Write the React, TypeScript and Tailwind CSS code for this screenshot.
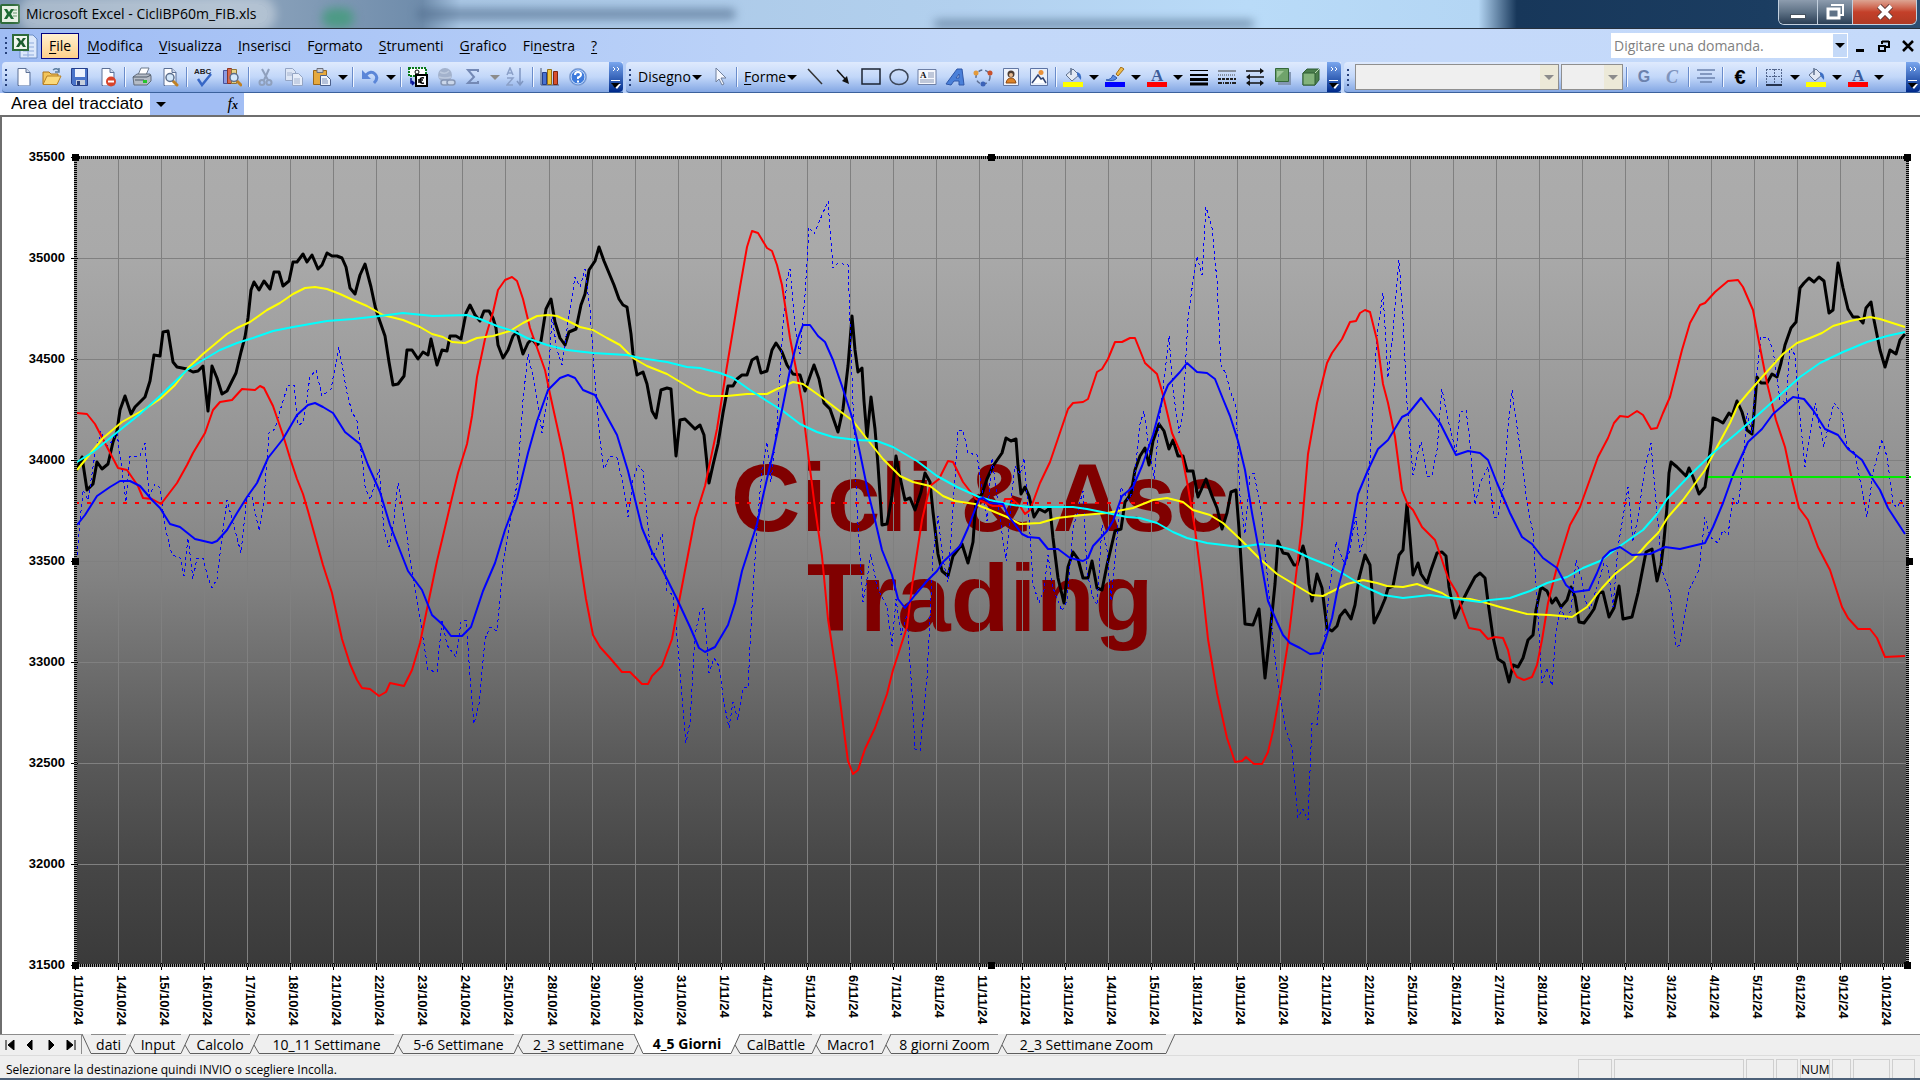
import type { ReactNode } from "react";
import clsx from "clsx";

const menus = [
  { key: "F", before: "", after: "ile" },
  { key: "M", before: "", after: "odifica" },
  { key: "V", before: "", after: "isualizza" },
  { key: "I", before: "", after: "nserisci" },
  { key: "o", before: "F", after: "rmato" },
  { key: "S", before: "", after: "trumenti" },
  { key: "G", before: "", after: "rafico" },
  { key: "n", before: "Fi", after: "estra" },
  { key: "?", before: "", after: "" },
];

const prices = ["35500", "35000", "34500", "34000", "33500", "33000", "32500", "32000", "31500"];

const dates = [
  "11/10/24", "14/10/24", "15/10/24", "16/10/24", "17/10/24", "18/10/24", "21/10/24", "22/10/24",
  "23/10/24", "24/10/24", "25/10/24", "28/10/24", "29/10/24", "30/10/24", "31/10/24", "1/11/24",
  "4/11/24", "5/11/24", "6/11/24", "7/11/24", "8/11/24", "11/11/24", "12/11/24", "13/11/24",
  "14/11/24", "15/11/24", "18/11/24", "19/11/24", "20/11/24", "21/11/24", "22/11/24", "25/11/24",
  "26/11/24", "27/11/24", "28/11/24", "29/11/24", "2/12/24", "3/12/24", "4/12/24", "5/12/24",
  "6/12/24", "9/12/24", "10/12/24",
];

const sheets = [
  { name: "dati", width: "w-[35px]" },
  { name: "Input", width: "w-[46px]" },
  { name: "Calcolo", width: "w-[60px]" },
  { name: "10_11 Settimane", width: "w-[135px]" },
  { name: "5-6 Settimane", width: "w-[111px]" },
  { name: "2_3 settimane", width: "w-[111px]" },
  { name: "4_5 Giorni", width: "w-[88px]", active: true },
  { name: "CalBattle", width: "w-[72px]" },
  { name: "Macro1", width: "w-[61px]" },
  { name: "8 giorni Zoom", width: "w-[107px]" },
  { name: "2_3 Settimane Zoom", width: "w-[159px]" },
];

const price =
  "76,471 82,457 87,490 93,484 97,462 102,469 108,464 113,442 117,431 120,410 125,396 131,414 135,407 145,397 150,381 154,355 160,356 163,332 168,331 173,362 177,367 187,369 193,372 198,371 203,366 208,411 212,366 217,378 222,394 227,391 236,373 241,352 245,337 248,318 251,290 254,282 259,290 264,281 270,289 274,272 279,272 283,286 289,281 293,262 297,262 303,254 307,262 312,255 318,269 322,265 327,253 332,256 337,256 342,258 346,267 350,288 355,294 360,275 365,264 371,287 375,306 378,316 385,336 389,362 393,385 398,384 404,376 407,350 412,350 418,359 423,352 428,355 431,339 437,365 442,350 447,351 450,336 456,336 461,339 466,313 470,305 475,315 480,321 484,311 489,311 493,318 496,328 498,345 503,358 508,350 513,336 517,332 523,354 528,343 532,339 537,345 541,341 546,309 551,299 555,322 560,338 565,345 569,332 576,329 581,305 585,294 589,270 595,261 599,247 604,261 609,273 614,285 619,299 623,305 627,307 631,334 633,354 637,375 643,372 647,384 652,411 656,418 661,390 667,388 671,389 676,456 680,420 685,419 695,429 700,425 704,435 709,483 713,465 718,444 723,413 728,386 733,386 737,379 742,375 747,375 752,360 757,357 761,373 767,371 772,350 776,343 782,352 787,365 793,374 800,375 805,391 808,382 814,365 819,379 824,403 830,409 838,432 843,409 848,366 852,316 855,350 858,372 862,368 864,401 867,437 871,397 875,429 878,465 882,525 887,524 892,496 896,456 900,477 905,500 910,498 915,510 921,492 925,473 930,482 933,512 938,554 942,571 948,576 953,556 962,544 968,563 973,542 976,500 982,494 987,479 993,466 1002,453 1006,438 1011,441 1016,439 1018,466 1021,494 1025,487 1029,496 1034,517 1039,509 1045,512 1050,508 1053,538 1058,578 1064,603 1068,567 1073,552 1078,559 1083,578 1088,578 1092,561 1097,588 1102,590 1107,565 1115,531 1121,529 1125,502 1131,494 1135,470 1140,456 1145,448 1149,465 1153,441 1159,424 1164,431 1169,449 1173,440 1178,456 1183,456 1187,471 1193,471 1198,497 1206,479 1212,496 1217,508 1222,529 1227,513 1231,492 1236,490 1239,529 1242,576 1245,624 1253,625 1259,609 1262,643 1265,678 1268,651 1272,614 1275,584 1278,541 1283,553 1288,554 1294,565 1297,565 1303,546 1307,561 1309,584 1312,601 1317,574 1322,588 1327,628 1332,631 1337,626 1340,616 1345,610 1351,619 1355,605 1359,578 1365,555 1370,565 1372,592 1374,623 1380,611 1385,599 1388,588 1393,586 1399,555 1403,550 1407,504 1410,538 1413,575 1418,563 1421,574 1427,583 1431,570 1437,553 1442,552 1446,556 1449,587 1455,618 1462,602 1468,590 1475,577 1480,573 1485,578 1488,602 1493,637 1498,659 1504,663 1509,682 1513,665 1518,667 1523,658 1528,640 1533,635 1536,610 1541,587 1547,591 1552,603 1556,598 1561,607 1567,600 1571,587 1575,597 1579,622 1584,623 1590,615 1594,609 1599,593 1603,592 1609,617 1614,608 1619,586 1623,619 1632,617 1638,593 1646,552 1652,549 1657,581 1661,565 1664,540 1667,507 1669,473 1671,462 1677,467 1686,476 1689,468 1693,477 1699,494 1705,487 1708,467 1711,443 1713,418 1718,420 1723,423 1729,413 1732,416 1737,401 1742,412 1747,430 1752,434 1754,413 1757,377 1761,383 1767,383 1772,374 1777,377 1781,363 1785,345 1791,328 1796,322 1800,288 1804,283 1809,278 1814,282 1819,277 1824,281 1829,313 1833,310 1838,263 1843,288 1848,309 1853,317 1858,317 1863,323 1866,308 1871,302 1874,320 1880,350 1885,367 1890,350 1896,354 1900,340 1905,334";

const yellow =
  "77,470 90,454 103,438 122,422 145,409 160,399 175,385 188,368 203,354 227,334 237,328 250,322 267,310 280,303 293,294 305,288 315,287 327,289 340,294 353,300 367,306 383,315 403,320 420,327 432,334 443,337 452,342 465,343 477,338 493,336 510,331 523,323 537,316 548,315 557,316 570,322 580,327 593,330 607,338 620,345 633,358 647,366 667,374 687,386 697,392 710,396 727,396 747,394 767,394 777,389 793,382 803,384 820,396 837,409 853,421 867,439 883,459 900,476 913,482 930,486 943,496 955,501 975,504 990,510 1007,517 1020,524 1040,523 1057,518 1083,515 1107,513 1133,508 1153,500 1167,498 1183,502 1193,510 1210,515 1223,523 1240,539 1260,559 1277,574 1297,586 1312,595 1323,596 1347,584 1363,580 1377,583 1387,586 1403,587 1417,584 1428,588 1442,593 1450,598 1470,599 1483,602 1500,607 1527,614 1550,615 1572,617 1587,607 1602,588 1615,574 1633,560 1647,544 1658,533 1668,517 1683,500 1705,470 1717,447 1730,423 1738,405 1748,393 1763,376 1783,354 1797,343 1810,338 1822,333 1833,326 1850,321 1870,317 1880,319 1905,327";

const cyan =
  "77,462 93,452 115,434 140,414 160,396 187,370 203,360 220,350 237,343 253,338 273,331 293,327 327,321 353,319 380,316 403,313 433,316 467,315 480,319 497,326 513,331 527,338 547,345 567,350 593,353 627,355 640,358 667,362 687,367 700,368 720,373 733,378 750,390 767,401 783,411 800,424 817,432 833,437 857,440 877,441 893,447 917,461 937,476 957,487 979,497 990,500 1007,504 1027,507 1073,507 1087,509 1107,513 1127,517 1140,518 1157,523 1173,532 1187,538 1207,543 1240,547 1260,544 1277,546 1293,550 1310,558 1330,566 1347,576 1363,586 1383,595 1403,598 1430,595 1450,598 1480,602 1490,600 1510,598 1530,591 1547,583 1567,577 1583,568 1600,561 1620,546 1643,530 1657,514 1667,499 1690,475 1713,453 1737,433 1760,413 1780,395 1800,377 1820,363 1843,352 1867,342 1887,336 1905,332";

const red =
  "77,413 87,414 95,424 107,447 118,468 127,470 138,486 143,498 152,499 161,504 177,483 187,465 193,453 205,433 213,410 220,402 232,400 242,389 255,390 260,386 264,388 273,406 283,435 290,458 297,479 303,494 308,511 323,565 332,593 342,639 350,664 357,680 362,688 370,689 379,696 386,692 390,683 404,686 412,670 420,643 427,609 437,561 443,536 451,502 458,473 467,444 472,416 477,377 485,339 493,312 498,290 505,280 512,277 517,281 523,299 530,328 535,342 545,370 550,394 563,453 572,504 580,560 586,599 593,635 600,647 610,658 622,672 630,672 642,684 648,684 652,676 662,666 672,639 678,607 687,560 695,518 705,486 717,429 725,378 733,330 740,287 747,247 752,231 758,233 767,248 772,251 777,265 782,285 790,338 797,374 802,403 808,453 815,508 822,556 828,619 837,678 845,739 848,761 853,774 858,770 865,749 875,728 887,694 893,670 907,627 913,579 922,520 930,486 939,479 948,461 953,462 963,482 976,499 993,506 1003,506 1005,499 1012,499 1020,506 1025,514 1030,510 1040,483 1050,462 1068,409 1073,403 1083,402 1088,399 1097,372 1102,369 1108,359 1115,342 1122,342 1130,338 1135,338 1145,363 1157,374 1163,395 1172,433 1182,456 1188,487 1195,529 1202,584 1208,639 1217,693 1227,738 1235,762 1242,761 1246,757 1254,764 1262,764 1268,752 1273,731 1280,693 1288,643 1295,584 1302,525 1308,454 1317,403 1327,363 1332,353 1342,339 1350,322 1356,321 1360,313 1365,310 1370,312 1377,340 1383,384 1388,403 1395,437 1402,490 1408,505 1413,510 1422,527 1435,540 1442,560 1448,578 1457,593 1463,612 1469,628 1480,630 1488,639 1495,637 1503,638 1508,650 1512,668 1517,677 1524,680 1532,677 1537,665 1542,640 1548,603 1557,567 1570,525 1580,507 1598,457 1608,438 1614,423 1620,416 1628,417 1637,411 1643,415 1651,429 1657,428 1663,413 1670,397 1682,350 1690,323 1700,305 1705,303 1715,292 1728,281 1738,280 1743,287 1753,310 1758,337 1767,383 1776,420 1785,447 1792,480 1799,508 1808,520 1818,547 1830,570 1842,607 1848,618 1858,629 1870,629 1877,638 1885,657 1905,656";

const blue =
  "77,525 85,515 97,496 110,487 120,481 130,481 140,486 152,500 160,508 170,524 180,527 195,539 212,543 217,541 227,530 237,513 247,497 257,483 268,458 283,439 297,415 308,405 315,403 323,407 333,413 345,432 360,444 368,465 380,492 390,525 408,571 422,590 432,615 442,624 451,636 462,636 471,627 483,591 495,563 505,530 517,498 528,453 537,421 548,390 560,378 568,375 575,378 583,390 595,395 605,413 617,435 628,471 642,528 652,552 663,571 677,599 690,627 699,648 705,652 715,647 728,625 735,603 742,571 750,546 757,524 763,496 773,453 783,405 790,370 798,338 803,325 810,325 818,336 825,342 833,360 842,386 852,417 860,453 868,492 875,520 882,550 892,575 898,599 905,608 915,595 927,581 937,571 943,562 960,546 968,528 979,499 983,498 990,503 1003,504 1008,515 1022,534 1028,537 1039,538 1048,549 1058,549 1070,558 1083,561 1088,558 1093,546 1107,531 1113,521 1122,496 1133,487 1142,466 1153,435 1163,397 1168,385 1180,372 1187,363 1197,372 1207,373 1215,379 1223,399 1230,416 1238,441 1245,470 1252,513 1262,567 1268,601 1277,622 1283,635 1290,643 1300,648 1310,654 1320,653 1325,641 1332,618 1337,592 1347,555 1358,494 1368,470 1378,449 1388,440 1402,417 1408,414 1421,398 1440,423 1450,443 1456,455 1468,451 1480,453 1488,460 1497,483 1510,513 1522,537 1532,544 1543,558 1557,568 1566,585 1574,592 1589,590 1597,573 1603,558 1610,551 1620,547 1632,555 1650,554 1665,547 1680,549 1705,543 1713,527 1723,503 1733,475 1748,442 1762,429 1773,414 1787,402 1793,397 1804,399 1813,410 1825,429 1838,435 1848,449 1862,460 1872,478 1880,490 1888,508 1905,534";

const dashed =
  "77,555 83,490 88,500 95,454 101,431 106,446 110,444 117,433 122,470 126,502 130,456 140,456 145,443 149,496 155,484 160,488 165,527 172,555 180,558 184,576 188,538 193,579 197,558 203,558 208,578 212,588 217,579 222,538 227,500 233,523 241,553 247,496 252,496 259,531 264,500 269,433 275,429 282,404 288,385 294,385 298,425 303,423 310,377 316,370 322,396 331,389 339,347 347,393 352,412 357,421 362,458 365,486 370,500 375,484 379,469 384,530 389,547 393,527 398,483 405,523 412,572 420,618 428,670 437,672 442,620 447,645 456,657 461,622 466,620 470,676 474,724 479,704 485,639 490,627 497,631 503,565 510,523 517,484 523,400 528,354 535,386 542,433 547,401 552,316 557,350 562,365 568,322 575,277 580,287 585,269 590,310 595,382 600,441 604,469 610,456 617,458 623,484 628,517 633,480 638,465 643,471 648,528 652,560 657,548 662,534 667,591 673,595 678,647 686,743 690,722 695,635 700,611 704,608 709,673 714,658 719,666 724,702 729,728 733,702 738,720 743,688 748,687 752,607 757,528 762,469 767,442 771,482 777,425 783,326 787,279 790,269 795,326 800,354 805,295 809,227 814,234 820,220 828,201 833,268 838,263 848,265 852,378 857,508 863,602 867,579 871,554 877,587 887,607 892,646 896,599 901,635 907,615 912,694 915,749 920,751 927,678 933,556 938,516 943,560 948,582 953,508 958,430 963,430 968,453 977,455 980,475 987,521 992,458 998,504 1006,561 1012,491 1015,466 1020,475 1024,458 1029,517 1033,584 1039,603 1044,590 1048,555 1053,588 1062,611 1067,601 1073,529 1083,491 1087,571 1092,595 1097,605 1102,525 1107,550 1111,601 1117,538 1121,487 1128,500 1133,491 1140,424 1144,411 1149,449 1154,479 1160,416 1169,336 1173,390 1179,433 1183,411 1188,319 1193,281 1197,256 1202,275 1206,207 1212,228 1217,281 1221,365 1226,374 1230,390 1236,407 1240,496 1245,534 1250,475 1254,473 1262,517 1268,584 1273,639 1278,685 1285,727 1292,748 1298,818 1303,809 1308,820 1312,723 1317,725 1323,656 1330,584 1336,542 1341,555 1345,565 1350,550 1356,517 1360,552 1365,534 1370,458 1377,336 1383,293 1388,378 1393,332 1399,260 1403,319 1407,403 1413,475 1417,456 1421,442 1427,477 1432,476 1437,450 1442,389 1448,420 1456,452 1460,412 1466,410 1469,433 1475,505 1480,483 1488,467 1494,517 1498,517 1504,483 1508,427 1512,390 1517,427 1522,460 1527,503 1533,533 1537,600 1542,683 1547,668 1552,686 1556,633 1561,607 1566,621 1571,610 1576,560 1581,577 1585,600 1590,609 1597,587 1604,563 1608,567 1613,607 1618,547 1628,487 1633,542 1638,517 1645,467 1651,443 1655,490 1662,570 1670,593 1676,647 1680,645 1689,590 1699,570 1705,517 1710,537 1718,543 1723,530 1728,535 1733,498 1738,505 1743,467 1747,413 1752,433 1755,390 1761,337 1768,337 1773,350 1780,400 1786,403 1790,347 1795,355 1800,417 1805,467 1810,433 1815,403 1824,447 1828,427 1834,403 1842,413 1847,447 1855,453 1860,480 1867,517 1873,473 1882,439 1887,457 1893,503 1897,508 1901,500 1905,509";

const handles = [
  [75, 157], [991, 157], [1907, 157],
  [75, 561], [1909, 561],
  [75, 965], [991, 965], [1907, 965],
];

const Svg = ({ children, className }: { children: ReactNode; className?: string }) => (
  <svg viewBox="0 0 20 20" className={clsx("size-5 shrink-0", className)} fill="none" aria-hidden="true">
    {children}
  </svg>
);

const ExcelIcon = () => (
  <Svg>
    <rect x="1" y="1" width="18" height="18" rx="1" fill="#e7f0e4" stroke="#2f6b3a" strokeWidth="2" />
    <path d="M13 6h4M13 9h4M13 12h4" stroke="#5d8f63" />
    <path d="M4 5h3l2 3 2-3h3l-3 5 3 5h-3l-2-3-2 3H4l3-5z" fill="#1d6b33" />
  </Svg>
);

const PageIcon = ({ children }: { children?: ReactNode }) => (
  <Svg>
    <path d="M4 1.500h8l4 4v13H4z" fill="#fdfdff" stroke="#5b6f94" />
    <path d="M12 1.500v4h4" fill="#cfd9ec" stroke="#5b6f94" />
    <path d="M15.500 6v12.500H5" stroke="#9fb0cf" />
    {children}
  </Svg>
);

const OpenIcon = () => (
  <Svg>
    <path d="M1 17V5h6l2 2h7v3" fill="#f3c55a" stroke="#a9731c" />
    <path d="M1 17.500 5 9h14l-4 8.500z" fill="#fbd97b" stroke="#b98124" />
    <path d="M11 3q4-3 6 1M17 1v4h-4" stroke="#5c7d9f" strokeWidth="1.500" />
  </Svg>
);

const SaveIcon = () => (
  <Svg>
    <path d="M1.500 1.500h16v17h-14l-2-2z" fill="#4a74c9" stroke="#27418c" />
    <path d="M5 2h10v8H5z" fill="#eef3fd" />
    <path d="M6 13h9v5H6z" fill="#c6cfdd" />
    <path d="M7 14h3v4H7z" fill="#2b3f77" />
  </Svg>
);

const PrintIcon = () => (
  <Svg>
    <path d="M6 8 9 1h8l-3 7z" fill="#fff" stroke="#6d7a8c" />
    <path d="M1 10l4-3h13l1 2v5l-4 4H2z" fill="#b5bcc6" stroke="#606b7a" />
    <path d="M1 10h14l4-2M3 13h9" stroke="#4f5a68" />
    <path d="M11 13h4v3h-4z" fill="#25c42d" />
  </Svg>
);

const Lens = () => (
  <>
    <path d="m13 14 4 4" stroke="#c08125" strokeWidth="3" strokeLinecap="round" />
    <circle cx="10" cy="10.500" r="4" fill="#d5e8fb" stroke="#5d6f8c" strokeWidth="1.500" />
  </>
);

const SpellIcon = () => (
  <Svg>
    <text x="0" y="7" className="font-['Liberation_Sans'] text-[8px] font-bold" fill="#222">ABC</text>
    <path d="m4 12 4 6 9-11" stroke="#3767c6" strokeWidth="2.500" />
  </Svg>
);

const ResearchIcon = () => (
  <Svg>
    <path d="M1.500 3.500h4v13h-4z" fill="#8c9ae0" stroke="#47529c" />
    <path d="M5.500 1.500h4v15h-4z" fill="#d7694f" stroke="#8d3522" />
    <path d="M9.500 2.500h5v14h-5z" fill="#e9d489" stroke="#907636" />
    <g transform="translate(2 0)"><Lens /></g>
  </Svg>
);

const CutIcon = () => (
  <Svg>
    <path d="m6 2 6 11M13 2 8 13" stroke="#8fa0bd" strokeWidth="2" />
    <circle cx="6" cy="15.500" r="2.500" stroke="#8fa0bd" strokeWidth="2" />
    <circle cx="13" cy="15.500" r="2.500" stroke="#8fa0bd" strokeWidth="2" />
  </Svg>
);

const CopyIcon = () => (
  <Svg>
    <path d="M1.500 1.500h7l3 3v9h-10z" fill="#dde6f5" stroke="#94a5c4" />
    <path d="M8.500 6.500h6l4 4v8h-10z" fill="#e6edf9" stroke="#94a5c4" />
    <path d="M3 6h5M3 8h5M10 12h6M10 14h6M10 16h6" stroke="#a5b4d0" />
  </Svg>
);

const PasteIcon = () => (
  <Svg>
    <path d="M1.500 3.500h13v14h-13z" fill="#e6a93e" stroke="#99661a" />
    <path d="M5 1.500h6v4H5z" fill="#c9cbd2" stroke="#6c6f7b" />
    <path d="M8.500 8.500h6l4 4v6h-10z" fill="#eef3fb" stroke="#4a5f8b" />
    <path d="M10 12h5M10 14h6M10 16h6" stroke="#7d90b8" />
  </Svg>
);

const UndoIcon = () => (
  <Svg>
    <path d="M6 8q5-5 9-1t-1 9" stroke="#5b86d8" strokeWidth="3" />
    <path d="M2 3v9h9z" fill="#5b86d8" />
  </Svg>
);

const EuroConvertIcon = () => (
  <Svg>
    <path d="M1 1h17v8H1z" fill="#fff" stroke="#0a7a1a" strokeDasharray="2 1" strokeWidth="2" />
    <circle cx="9" cy="5" r="2" stroke="#000" />
    <path d="M8 8h11v11H8z" fill="#fff" stroke="#000" strokeWidth="2" />
    <path d="M16 11q-4-1-4 2.500t4 2.500M10 13h5M10 15h4" stroke="#000" strokeWidth="1.500" />
    <path d="M3 11v5h3M4 14l2 2-2 2" stroke="#0b189b" strokeWidth="1.500" />
  </Svg>
);

const LinkIcon = () => (
  <Svg>
    <circle cx="9" cy="8" r="7" fill="#a3b2cc" />
    <path d="M4 5q5 3 9-1M3 10q6 2 12 0" stroke="#bcc9de" strokeWidth="1.500" />
    <rect x="5" y="13" width="8" height="5" rx="2.500" stroke="#8797b4" strokeWidth="1.500" fill="#cbd7ea" />
    <rect x="11" y="13" width="8" height="5" rx="2.500" stroke="#8797b4" strokeWidth="1.500" fill="#cbd7ea" />
  </Svg>
);

const SumIcon = () => (
  <Svg>
    <path d="M14 5V3H4l6 7-6 6h10v-2" stroke="#7489b5" strokeWidth="2" />
  </Svg>
);

const SortIcon = () => (
  <Svg>
    <path d="m1 8 3-7 3 7M2 6h4M1 11h6l-6 7h6" stroke="#8ba0c8" strokeWidth="1.500" />
    <path d="M14 1v16m-3-3 3 4 3-4" stroke="#8097c2" strokeWidth="1.500" />
  </Svg>
);

const ChartIcon = () => (
  <Svg>
    <path d="M1 1v17h18" stroke="#4b5878" />
    <path d="M2.500 5.500h4v12h-4z" fill="#4871cf" stroke="#233f8c" />
    <path d="M7.500 2.500h4v15h-4z" fill="#f0c53e" stroke="#94701a" />
    <path d="M13.500 4.500h4v13h-4z" fill="#d8502d" stroke="#7c2612" />
  </Svg>
);

const HelpIcon = () => (
  <Svg>
    <circle cx="10" cy="10" r="8.500" fill="#3e7bdc" stroke="#8fa7d1" />
    <circle cx="10" cy="10" r="7" stroke="#dce9fb" />
    <path d="M7 8q0-3 3-3t3 2.500q0 2-3 3V12M10 13.500v2" stroke="#fff" strokeWidth="2" />
  </Svg>
);

const PointerIcon = () => (
  <Svg>
    <path d="M6 1v14l3-3 3 6 2-1-3-6h5z" fill="#f5f8ff" stroke="#6f7f9c" />
  </Svg>
);

const ArrowLineIcon = () => (
  <Svg>
    <path d="m4 3 10 11" stroke="#111" strokeWidth="1.500" />
    <path d="m16 17-2-8-5 5z" fill="#111" />
  </Svg>
);

const TextBoxIcon = () => (
  <Svg>
    <path d="M1 2.500h18v15H1z" fill="#f6f8fd" stroke="#6d7fa5" />
    <text x="3" y="11" className="font-['Liberation_Serif'] text-[9px] font-bold" fill="#111">A</text>
    <path d="M11 6h6M11 8h6M11 10h6M3 13h14M3 15h14" stroke="#8796b5" />
  </Svg>
);

const WordArtIcon = () => (
  <Svg>
    <path d="M1 17 12 2h5l2 16h-5v-4H9l-3 4zM11 11h3V7z" fill="#4a80d9" stroke="#2f57a8" fillRule="evenodd" />
  </Svg>
);

const DiagramIcon = () => (
  <Svg>
    <circle cx="10" cy="10" r="7" stroke="#5b6d90" strokeWidth="1.500" strokeDasharray="4 3" />
    <circle cx="3" cy="6" r="2.500" fill="#e39a3b" />
    <circle cx="17" cy="6" r="2.500" fill="#c8512c" />
    <circle cx="10" cy="17" r="2.500" fill="#3c63b8" />
  </Svg>
);

const ClipArtIcon = () => (
  <Svg>
    <path d="M2.500 1.500h15v17h-15z" fill="#eef2fb" stroke="#6378a4" />
    <circle cx="10" cy="7" r="3.500" fill="#4c3c33" />
    <path d="M5 16q1-5 5-5t5 5z" fill="#dd8327" stroke="#8d4a12" />
    <circle cx="10" cy="8" r="2" fill="#e8bb92" />
  </Svg>
);

const PictureIcon = () => (
  <Svg>
    <path d="M1.500 1.500h17v17h-17z" fill="#e8effb" stroke="#5d74a5" />
    <circle cx="12" cy="5.500" r="2.500" fill="#e9913a" />
    <path d="M3 16 9 8l3 4 2-1 3 5" stroke="#2f4374" strokeWidth="1.500" fill="#fff" />
  </Svg>
);

const FillIcon = () => (
  <Svg>
    <path d="m3 8 7-6 6 6-7 6z" fill="#e2e9f4" stroke="#61728f" />
    <path d="M8 1v7" stroke="#61728f" strokeWidth="1.500" />
    <path d="M14 5q5 1 4 8-2-2-4-5z" fill="#3d6fc4" />
    <path d="M0 15h20v5H0z" fill="#ff0" />
  </Svg>
);

const BrushIcon = () => (
  <Svg>
    <path d="m11 7 5-7 3 2-6 7z" fill="#eebb4b" stroke="#a16d16" />
    <path d="M1 13q5 0 7-5l4 3q-3 4-11 2z" fill="#5b8be0" stroke="#2c57aa" />
    <path d="M0 15h20v5H0z" fill="#00f" />
  </Svg>
);

const FontColorIcon = () => (
  <Svg className="overflow-visible">
    <text x="4" y="14" className="font-['Liberation_Serif'] text-[17px] font-bold" fill="#3c5c99">A</text>
    <path d="M0 15h20v5H0z" fill="#f00" />
  </Svg>
);

const LineStyleIcon = () => (
  <Svg>
    <path d="M1 3.500h18" stroke="#000" />
    <path d="M1 8h18" stroke="#000" strokeWidth="2" />
    <path d="M1 12.500h18" stroke="#000" strokeWidth="3" />
    <path d="M1 17h18" stroke="#000" strokeWidth="3" />
  </Svg>
);

const DashStyleIcon = () => (
  <Svg>
    <path d="M1 4h18" stroke="#444" />
    <path d="M1 8h18" stroke="#444" strokeDasharray="1 1" />
    <path d="M1 12h18" stroke="#222" strokeWidth="2" strokeDasharray="3 1" />
    <path d="M1 16h18" stroke="#222" strokeWidth="2" strokeDasharray="4 1 1 1" />
  </Svg>
);

const ArrowStyleIcon = () => (
  <Svg>
    <path d="M1 4h17M3 10h16M2 16h16" stroke="#111" strokeWidth="1.500" />
    <path d="m15 1 4 3-4 3zM5 7l-4 3 4 3zM5 13l-4 3 4 3zM15 13l4 3-4 3z" fill="#111" />
  </Svg>
);

const ShadowIcon = () => (
  <Svg>
    <path d="M5 5h13v13H5z" fill="#8396b3" />
    <path d="M2.500 1.500h13v13h-13z" fill="#6fa36b" stroke="#35683a" />
    <path d="M4 4h7L4 11z" fill="#9cc596" />
  </Svg>
);

const CubeIcon = () => (
  <Svg>
    <path d="M2 6 6 2h12v11l-4 5H2z" fill="#4a7d4c" stroke="#2f5f35" />
    <path d="M2 6h12v12H2z" fill="#83b37c" stroke="#2f5f35" />
    <path d="m14 6 4-4" stroke="#bcd8b5" />
  </Svg>
);

const AlignIcon = () => (
  <Svg>
    <path d="M1 3h18M4 7h12M1 11h18M4 15h12" stroke="#6c82ad" strokeWidth="1.500" />
  </Svg>
);

const BorderIcon = () => (
  <Svg>
    <path d="M2.500 2v15M10.500 2v15M17.500 2v15M2 2.500h16M2 9.500h16" stroke="#53668c" strokeDasharray="2 1" />
    <path d="M2 18h16" stroke="#26344f" strokeWidth="2" />
  </Svg>
);

const ToolButton = ({ label, children }: { label: string; children: ReactNode }) => (
  <button type="button" aria-label={label} className="flex h-7 w-7 shrink-0 items-center justify-center">
    {children}
  </button>
);

const Caret = ({ muted }: { muted?: boolean }) => (
  <svg viewBox="0 0 10 5" className="h-[5px] w-[10px] shrink-0" aria-hidden="true">
    <path d="M0 0h10L5 5z" fill={muted ? "#8c8c8c" : "#000"} />
  </svg>
);

const CaretButton = ({ label, muted }: { label: string; muted?: boolean }) => (
  <button type="button" aria-label={label} className="flex h-7 w-[14px] shrink-0 items-center justify-center">
    <Caret muted={muted} />
  </button>
);

const Separator = () => (
  <span className="flex w-[6px] shrink-0 justify-center">
    <span className="h-5 w-px bg-[#6a8ccb]" />
    <span className="h-5 w-px bg-[#f1f6ff]" />
  </span>
);

const Grip = () => (
  <span className="flex w-2 shrink-0 flex-col items-center gap-[3px]">
    {[0, 1, 2, 3].map((dot) => (
      <span key={dot} className="size-[2px] bg-[#27417c]" />
    ))}
  </span>
);

const MoreButton = () => (
  <button
    type="button"
    aria-label="Opzioni barra degli strumenti"
    className="flex w-[14px] shrink-0 flex-col items-center justify-between self-stretch rounded-r-sm bg-linear-to-b from-[#7aa6ee] to-[#00288a] pt-[5px] pb-[3px]"
  >
    <svg viewBox="0 0 8 5" className="h-[5px] w-2" fill="none" stroke="#fff" aria-hidden="true">
      <path d="m1 0 2 2-2 2M5 0l2 2-2 2" />
    </svg>
    <svg viewBox="0 0 10 9" className="h-[9px] w-[10px]" aria-hidden="true">
      <path d="M0 0h9v1H0z" fill="#fff" />
      <path d="M1 4h9L6 9z" fill="#fff" />
      <path d="M0 3h9L4 8z" fill="#000" />
    </svg>
  </button>
);

const toolbarClass =
  "flex items-center rounded-l-sm border-b border-[#3b619c] bg-linear-to-b from-[#dfeafd] via-[#c2d7f9] to-[#84a7e3]";

const TitleBar = () => (
  <header className="flex h-[29px] items-start justify-between overflow-hidden border-b border-[#26303c] bg-[linear-gradient(90deg,#7791ad_0,#8ea5bd_12%,#6f8cab_22%,#a9c6e4_24%,#b2d0ee_50%,#b9dbf8_65%,#b4d6f4_77%,#17375a_79%,#1b3d61_92%,#2c4f73_100%)]">
    <div className="flex h-7 items-center gap-[6px]">
      <ExcelIcon />
      <h1 className="rounded-full bg-white/35 pr-3 text-sm leading-5 shadow-[0_0_10px_8px_rgba(255,255,255,0.35)]">
        Microsoft Excel - CicliBP60m_FIB.xls
      </h1>
      <span className="ml-12 h-5 w-8 self-end rounded-full bg-[#4d9a85] blur-[5px]" />
      <span className="ml-14 h-3 w-80 rounded-full bg-[#54708f]/60 blur-[4px]" />
      <span className="ml-48 h-2 w-80 self-end rounded-full bg-[#54708f]/70 blur-[5px]" />
    </div>
    <div className="mr-[3px] flex h-[25px] overflow-hidden rounded-b-md border border-t-0 border-[#c3d0de]">
      <button type="button" aria-label="Riduci a icona" className="flex w-[39px] items-end justify-center border-r border-[#c3d0de] bg-linear-to-b from-[#8d9cae] via-[#5f7286] via-50% to-[#2b3f55] pb-[5px]">
        <span className="h-[5px] w-4 border border-[#47535f] bg-white" />
      </button>
      <button type="button" aria-label="Ripristina" className="flex w-[35px] items-center justify-center border-r border-[#c3d0de] bg-linear-to-b from-[#8d9cae] via-[#5f7286] via-50% to-[#2b3f55]">
        <svg viewBox="0 0 20 18" className="h-[18px] w-5" fill="none" aria-hidden="true">
          <path d="M6 2h12v10h-3" stroke="#fff" strokeWidth="2" />
          <path d="M3 6h11v9H3z" fill="#5f7286" stroke="#fff" strokeWidth="3" />
        </svg>
      </button>
      <button type="button" aria-label="Chiudi" className="flex w-[63px] items-center justify-center bg-linear-to-b from-[#dca493] via-[#c4402a] via-50% to-[#b03a24]">
        <svg viewBox="0 0 20 16" className="h-4 w-5" fill="none" aria-hidden="true">
          <path d="m4 2 12 12M16 2 4 14" stroke="#5f3a37" strokeWidth="6" />
          <path d="m4 2 12 12M16 2 4 14" stroke="#fff" strokeWidth="4" />
        </svg>
      </button>
    </div>
  </header>
);

const MenuBar = () => (
  <div className="flex h-[33px] items-center justify-between">
    <nav className="flex items-center pl-[2px]">
      <Grip />
      <span className="mr-[3px] flex pl-[2px]">
        <svg viewBox="0 0 26 26" className="size-[26px]" fill="none" aria-hidden="true">
          <path d="M8 2h13l4 4v19H8z" fill="#dce8fb" stroke="#6b8cc4" />
          <path d="M11 10h11M11 14h11M11 18h11M11 22h11M16 8v16" stroke="#8eaadb" />
          <path d="M1 2h15v15H1z" fill="#f0f6ee" stroke="#2e6b3a" strokeWidth="2" />
          <path d="M4 5h3l2 3 2-3h3l-3 4 3 5h-3l-2-3-2 3H4l3-5z" fill="#1d5e2f" />
        </svg>
      </span>
      {menus.map((menu, i) => (
        <button
          key={menu.key}
          type="button"
          className={clsx(
            "h-[26px] border px-[7px] text-sm leading-5",
            i === 0 ? "border-[#000080] bg-linear-to-b from-[#fff0cf] to-[#ffd08a]" : "border-transparent"
          )}
        >
          {menu.before}
          <span className="underline underline-offset-2">{menu.key}</span>
          {menu.after}
        </button>
      ))}
    </nav>
    <div className="flex items-center">
      <div className="flex h-[25px] w-[237px] bg-white">
        <input
          type="text"
          aria-label="Digitare una domanda"
          placeholder="Digitare una domanda."
          className="min-w-0 flex-1 px-[3px] text-sm outline-none placeholder:text-[#7f7f7f]"
        />
        <button type="button" aria-label="Mostra domande" className="my-px mr-px flex w-[14px] items-center justify-center bg-[#c4d9f8]">
          <Caret />
        </button>
      </div>
      <button type="button" aria-label="Riduci finestra" className="flex h-6 w-6 items-end justify-center pb-[6px]">
        <span className="h-[3px] w-2 bg-black" />
      </button>
      <button type="button" aria-label="Ripristina finestra" className="flex size-6 items-center justify-center">
        <svg viewBox="0 0 12 12" className="size-3" fill="none" stroke="#000" aria-hidden="true">
          <path d="M4 1v3M4 1.500h7M11 1v6H8" strokeWidth="2" />
          <path d="M1 6h6v5H1z" strokeWidth="2" />
        </svg>
      </button>
      <button type="button" aria-label="Chiudi finestra" className="flex size-6 items-center justify-center">
        <svg viewBox="0 0 12 12" className="size-3" stroke="#000" strokeWidth="2.500" aria-hidden="true">
          <path d="m1 1 10 10M11 1 1 11" />
        </svg>
      </button>
    </div>
  </div>
);

const Toolbars = () => (
  <div className="flex h-[31px] items-stretch gap-[3px] pl-[2px]">
    <div className={clsx(toolbarClass, "w-[621px]")}>
      <Grip />
      <ToolButton label="Nuovo"><PageIcon /></ToolButton>
      <ToolButton label="Apri"><OpenIcon /></ToolButton>
      <ToolButton label="Salva"><SaveIcon /></ToolButton>
      <ToolButton label="Autorizzazione">
        <PageIcon>
          <circle cx="13" cy="14.500" r="5" fill="#d8432b" />
          <path d="M10 14.500h6" stroke="#fff" strokeWidth="2" />
        </PageIcon>
      </ToolButton>
      <Separator />
      <ToolButton label="Stampa"><PrintIcon /></ToolButton>
      <ToolButton label="Anteprima di stampa"><PageIcon><Lens /></PageIcon></ToolButton>
      <Separator />
      <ToolButton label="Controllo ortografia"><SpellIcon /></ToolButton>
      <ToolButton label="Ricerche"><ResearchIcon /></ToolButton>
      <Separator />
      <ToolButton label="Taglia"><CutIcon /></ToolButton>
      <ToolButton label="Copia"><CopyIcon /></ToolButton>
      <ToolButton label="Incolla"><PasteIcon /></ToolButton>
      <CaretButton label="Opzioni Incolla" />
      <Separator />
      <ToolButton label="Annulla"><UndoIcon /></ToolButton>
      <CaretButton label="Elenco Annulla" />
      <Separator />
      <ToolButton label="Conversione euro"><EuroConvertIcon /></ToolButton>
      <ToolButton label="Collegamento ipertestuale"><LinkIcon /></ToolButton>
      <ToolButton label="Somma automatica"><SumIcon /></ToolButton>
      <CaretButton label="Altre funzioni" muted />
      <ToolButton label="Ordinamento crescente"><SortIcon /></ToolButton>
      <Separator />
      <ToolButton label="Creazione guidata Grafico"><ChartIcon /></ToolButton>
      <ToolButton label="Guida"><HelpIcon /></ToolButton>
      <span className="flex-1" />
      <MoreButton />
    </div>
    <div className={clsx(toolbarClass, "w-[715px]")}>
      <Grip />
      <button type="button" className="flex w-[72px] items-center justify-between px-1 text-sm">
        <span>Dise<span className="underline underline-offset-2">g</span>no</span>
        <Caret />
      </button>
      <ToolButton label="Seleziona oggetti"><PointerIcon /></ToolButton>
      <Separator />
      <button type="button" className="flex w-[61px] items-center justify-between px-1 text-sm">
        <span><span className="underline underline-offset-2">F</span>orme</span>
        <Caret />
      </button>
      <ToolButton label="Linea"><Svg><path d="m3 2 14 15" stroke="#333" strokeWidth="1.500" /></Svg></ToolButton>
      <ToolButton label="Freccia"><ArrowLineIcon /></ToolButton>
      <ToolButton label="Rettangolo"><Svg><path d="M1 2h18v15H1z" stroke="#1c2433" strokeWidth="1.500" /></Svg></ToolButton>
      <ToolButton label="Ovale"><Svg><ellipse cx="10" cy="10" rx="9" ry="7.500" stroke="#3c4657" strokeWidth="1.500" /></Svg></ToolButton>
      <ToolButton label="Casella di testo"><TextBoxIcon /></ToolButton>
      <ToolButton label="Inserisci WordArt"><WordArtIcon /></ToolButton>
      <ToolButton label="Inserisci diagramma"><DiagramIcon /></ToolButton>
      <ToolButton label="Inserisci ClipArt"><ClipArtIcon /></ToolButton>
      <ToolButton label="Inserisci immagine"><PictureIcon /></ToolButton>
      <Separator />
      <ToolButton label="Colore riempimento"><FillIcon /></ToolButton>
      <CaretButton label="Scegli riempimento" />
      <ToolButton label="Colore linea"><BrushIcon /></ToolButton>
      <CaretButton label="Scegli colore linea" />
      <ToolButton label="Colore carattere"><FontColorIcon /></ToolButton>
      <CaretButton label="Scegli colore carattere" />
      <ToolButton label="Stile linea"><LineStyleIcon /></ToolButton>
      <ToolButton label="Stile tratteggio"><DashStyleIcon /></ToolButton>
      <ToolButton label="Stile freccia"><ArrowStyleIcon /></ToolButton>
      <ToolButton label="Stile ombreggiatura"><ShadowIcon /></ToolButton>
      <ToolButton label="Stile 3D"><CubeIcon /></ToolButton>
      <span className="flex-1" />
      <MoreButton />
    </div>
    <div className={clsx(toolbarClass, "flex-1")}>
      <Grip />
      <div className="ml-[3px] flex h-[26px] w-[204px] items-center border border-[#8f8f8f] bg-[#efefef]">
        <select disabled aria-label="Tipo di carattere" className="h-full flex-1 appearance-none" />
        <span className="flex h-full w-[18px] items-center justify-center bg-[#ece9d8]"><Caret muted /></span>
      </div>
      <div className="mr-px ml-[2px] flex h-[26px] w-[62px] items-center border border-[#8f8f8f] bg-[#efefef]">
        <select disabled aria-label="Dimensione carattere" className="h-full min-w-0 flex-1 appearance-none" />
        <span className="flex h-full w-[18px] items-center justify-center bg-[#ece9d8]"><Caret muted /></span>
      </div>
      <Separator />
      <ToolButton label="Grassetto"><span className="font-['Liberation_Sans'] text-base font-bold text-[#6c82ad]">G</span></ToolButton>
      <ToolButton label="Corsivo"><span className="font-['Liberation_Serif'] text-lg font-bold text-[#7f94bd] italic">C</span></ToolButton>
      <Separator />
      <ToolButton label="Allinea al centro"><AlignIcon /></ToolButton>
      <Separator />
      <ToolButton label="Euro"><span className="font-['Liberation_Sans'] text-xl font-bold">€</span></ToolButton>
      <Separator />
      <ToolButton label="Bordi"><BorderIcon /></ToolButton>
      <CaretButton label="Scegli bordi" />
      <ToolButton label="Riempimento"><FillIcon /></ToolButton>
      <CaretButton label="Scegli colore riempimento" />
      <ToolButton label="Carattere"><FontColorIcon /></ToolButton>
      <CaretButton label="Scegli carattere" />
      <span className="flex-1" />
      <MoreButton />
    </div>
  </div>
);

const FormulaBar = () => (
  <div className="flex h-[22px] bg-white pl-[2px]">
    <input
      type="text"
      aria-label="Casella nome"
      defaultValue="Area del tracciato"
      className="w-[148px] bg-white pl-[9px] font-['Liberation_Sans'] text-[17px] leading-5 outline-none"
    />
    <div className="flex w-[94px] items-center justify-between bg-[#a2bef4] pr-[6px] pl-1">
      <CaretButton label="Elenco nomi" />
      <button type="button" aria-label="Inserisci funzione" className="font-['Liberation_Serif'] text-base leading-5 italic">
        f<span className="text-xs font-bold">x</span>
      </button>
    </div>
    <input type="text" aria-label="Barra della formula" className="flex-1 bg-white outline-none" />
  </div>
);

const PlotLines = () => (
  <svg
    viewBox="75 157 1832 808"
    preserveAspectRatio="none"
    className="absolute inset-0 h-full w-full overflow-visible"
    fill="none"
    strokeLinejoin="round"
    role="img"
    aria-label="Grafico dei cicli"
  >
    <g stroke="#808080" strokeWidth="1" shapeRendering="crispEdges">
      {prices.slice(1, -1).map((value, i) => (
        <path key={value} d={`M75 ${258 + i * 101}.500H1907`} />
      ))}
      {dates.slice(1).map((date, i) => (
        <path key={date} d={`M${Math.round(118 + i * 43.05)}.500 157V965`} />
      ))}
    </g>
    <g stroke="#000" strokeWidth="1" shapeRendering="crispEdges">
      {prices.map((value, i) => (
        <path key={value} d={`M71 ${157 + i * 101}.500H78`} />
      ))}
      {dates.map((date, i) => (
        <path key={date} d={`M${Math.round(75 + i * 43.05)}.500 963V970`} />
      ))}
    </g>
    <path d="M75 503H1905" stroke="#f00" strokeWidth="2" strokeDasharray="4 8" />
    <polyline points={price} stroke="#000" strokeWidth="3" />
    <polyline points={dashed} stroke="#00f" strokeWidth="1" strokeDasharray="3 3" shapeRendering="crispEdges" />
    <polyline points={red} stroke="#f00" strokeWidth="2" />
    <polyline points={yellow} stroke="#ff0" strokeWidth="2" />
    <polyline points={cyan} stroke="#0ff" strokeWidth="2" />
    <polyline points={blue} stroke="#00f" strokeWidth="2" />
    <path d="M1708 477H1911" stroke="#00eb00" strokeWidth="2" />
    <g shapeRendering="crispEdges">
      <rect x="75" y="157" width="1832" height="808" stroke="#9a9a9a" strokeWidth="3" />
      <rect x="75" y="157" width="1832" height="808" stroke="#000" strokeWidth="3" strokeDasharray="1 1" />
      {handles.map(([x, y]) => (
        <rect key={`${x}-${y}`} x={x - 3} y={y - 3} width="7" height="7" fill="#000" />
      ))}
    </g>
  </svg>
);

const ChartArea = () => (
  <main className="flex flex-1 flex-col border-t-2 border-l-2 border-[#6e6e6e] bg-white pt-10 pr-[13px] font-['Liberation_Sans'] text-[13px] leading-4 font-bold">
    <div className="flex flex-1">
      <div className="-my-2 flex w-[73px] shrink-0 flex-col justify-between pr-[10px] text-right">
        {prices.map((value) => (
          <span key={value}>{value}</span>
        ))}
      </div>
      <div className="relative flex flex-1 items-center justify-center bg-[linear-gradient(180deg,#acacac_0%,#a9a9a9_12%,#9c9c9c_28%,#8f8f8f_42%,#828282_52%,#6c6c6c_64%,#575757_76%,#464646_88%,#3a3a3a_100%)] pr-[22px] pb-[26px]">
        <p className="text-center text-[96px] leading-[100px] text-[#800000]">
          Cicli &amp; Asc
          <br />
          Trading
        </p>
        <PlotLines />
      </div>
    </div>
    <div className="ml-[73px] grid h-[69px] grid-cols-[repeat(42,1fr)_24px] pt-[10px]">
      {dates.map((date) => (
        <span key={date} className="-ml-[5px] w-4 [writing-mode:vertical-rl]">
          {date}
        </span>
      ))}
    </div>
  </main>
);

const TabEdge = ({ kind }: { kind: "first" | "slash" | "activeLeft" | "activeRight" | "last" }) => (
  <svg viewBox="0 0 9 20" className="h-5 w-[9px] shrink-0" fill="none" stroke="#5f5f5f" aria-hidden="true">
    {kind === "activeLeft" && <path d="M0 0 9 19.500V0z" fill="#fff" stroke="none" />}
    {kind === "activeRight" && <path d="M0 0h9L0 19.500z" fill="#fff" stroke="none" />}
    {kind === "first" || kind === "activeLeft" ? <path d="m0 0 9 19.500" /> : <path d="M9 0 0 19.500" />}
    {(kind === "slash" || kind === "activeRight") && <path d="m4 11 5 8.500" />}
    {kind === "activeLeft" && <path d="m4 11-4 8.500" />}
  </svg>
);

const edgeBefore = (i: number) => {
  if (i === 0) return "first";
  if (sheets[i].active) return "activeLeft";
  return sheets[i - 1].active ? "activeRight" : "slash";
};

const navPaths = ["M1 0v10M9 0v10L3 5z", "M7 0v10L2 5z", "M3 0v10l5-5z", "M9 0v10M1 0v10l6-5z"];
const navLabels = ["Primo foglio", "Foglio precedente", "Foglio successivo", "Ultimo foglio"];

const SheetTabs = () => (
  <div className="flex h-[22px] items-start border-b border-[#dcdcdc] bg-[#efefef]">
    <div className="flex h-5 w-[82px] shrink-0 items-center justify-around border-t border-r border-[#8c8c8c]">
      {navPaths.map((d, i) => (
        <button key={d} type="button" aria-label={navLabels[i]} className="flex h-full flex-1 items-center justify-center">
          <svg viewBox="0 0 10 10" className="size-[10px]" fill="#000" stroke="#000" aria-hidden="true">
            <path d={d} />
          </svg>
        </button>
      ))}
    </div>
    {sheets.map((sheet, i) => (
      <div key={sheet.name} className="flex">
        <TabEdge kind={edgeBefore(i)} />
        <button
          type="button"
          className={clsx(
            "h-5 border-b border-[#5f5f5f] text-center text-sm leading-[19px] whitespace-nowrap",
            sheet.width,
            sheet.active ? "bg-white font-bold" : "border-t border-t-[#8c8c8c] leading-[18px]"
          )}
        >
          {sheet.name}
        </button>
      </div>
    ))}
    <TabEdge kind="last" />
    <span className="flex-1 border-t border-[#8c8c8c]" />
  </div>
);

const indicators = [
  { width: "w-[34px]" },
  { width: "w-[130px]" },
  { width: "w-7" },
  { width: "w-[22px]" },
  { width: "w-[30px]", text: "NUM" },
  { width: "w-[19px]" },
  { width: "w-[37px]" },
  { width: "w-[23px]" },
];

const StatusBar = () => (
  <footer className="flex h-6 items-end justify-between border-b-2 border-[#4c6078] bg-[#efefef] pr-[5px] pl-[6px] text-xs leading-4">
    <span>Selezionare la destinazione quindi INVIO o scegliere Incolla.</span>
    <div className="flex gap-[2px]">
      {indicators.map((cell, i) => (
        <span key={i} className={clsx("h-[19px] border border-b-0 border-[#cfcfcf] pt-[2px] text-center", cell.width)}>
          {cell.text}
        </span>
      ))}
    </div>
  </footer>
);

const App = () => (
  <div className="flex min-h-screen min-w-full flex-col overflow-hidden bg-white font-['Open_Sans','Noto_Sans',sans-serif] text-black">
    <TitleBar />
    <div className="bg-linear-to-r from-[#9fbcf4] via-[#c3d8f9] via-50% to-[#c5dafa]">
      <MenuBar />
      <Toolbars />
    </div>
    <FormulaBar />
    <ChartArea />
    <SheetTabs />
    <StatusBar />
  </div>
);

export default App;
